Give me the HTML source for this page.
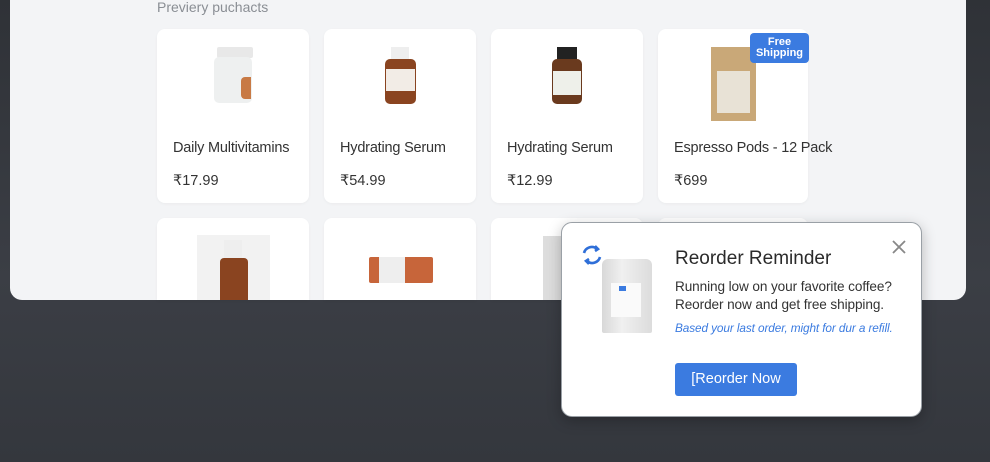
<!DOCTYPE html>
<html><head><meta charset="utf-8"><style>
*{box-sizing:border-box;margin:0;padding:0}
body{width:990px;height:462px;overflow:hidden;background:linear-gradient(180deg,#2f3237 0%,#3b3e45 60%,#34373d 100%);font-family:"Liberation Sans",sans-serif;position:relative}
.panel{position:absolute;left:10px;top:-20px;width:956px;height:320px;background:#f3f4f6;border-radius:12px;overflow:hidden}
.title{position:absolute;left:147px;top:19px;font-size:14px;color:#8a8e94}
.card{position:absolute;width:152px;height:174px;background:#fff;border-radius:8px;box-shadow:0 1px 3px rgba(0,0,0,.04)}
.card .n{position:absolute;left:16px;top:111px;font-size:14.5px;color:#333;white-space:nowrap;letter-spacing:-0.2px}
.card .p{position:absolute;left:16px;top:144px;font-size:14.5px;color:#333}
.pic{position:absolute}
.badge{position:absolute;left:750px;top:33px;width:59px;height:30px;background:#3b7be0;border-radius:4px;color:#fff;font-size:11px;font-weight:bold;text-align:center;line-height:11px;padding-top:4px}
.pop{position:absolute;left:561px;top:222px;width:361px;height:195px;background:#fff;border-radius:11px;border:1px solid #9aa0a6;box-shadow:0 4px 14px rgba(0,0,0,.25)}
.pop h2{position:absolute;left:113px;top:25px;font-size:19px;font-weight:normal;color:#2b2b2b}
.pop .t{position:absolute;left:113px;top:55px;font-size:13.6px;line-height:18px;color:#333;letter-spacing:-0.1px}
.pop .i{position:absolute;left:113px;top:98px;font-size:11.8px;color:#3b7be0;font-style:italic;letter-spacing:-0.1px}
.pop .b{position:absolute;left:113px;top:140px;width:122px;height:33px;background:#3b7be0;border-radius:3px;color:#fff;font-size:14.5px;line-height:33px;text-align:center}
.x{position:absolute;left:330px;top:17px}
</style></head><body>
<div class="panel">
<div class="title">Previery puchacts</div>
</div>
<div class="card" style="left:157px;top:29px">
<div class="pic" style="left:60px;top:18px;width:36px;height:11px;background:#e8e8e8;border-radius:2px"></div>
<div class="pic" style="left:57px;top:28px;width:38px;height:46px;background:#eef0f0;border-radius:5px"></div>
<div class="pic" style="left:84px;top:48px;width:10px;height:22px;background:#c87a45;border-radius:4px 0 0 4px"></div>
<div class="n">Daily Multivitamins</div><div class="p">₹17.99</div></div>
<div class="card" style="left:324px;top:29px">
<div class="pic" style="left:67px;top:18px;width:18px;height:13px;background:#eee"></div>
<div class="pic" style="left:61px;top:30px;width:31px;height:45px;background:#8a4420;border-radius:5px"></div>
<div class="pic" style="left:62px;top:40px;width:29px;height:22px;background:#f2ece6"></div>
<div class="n">Hydrating Serum</div><div class="p">₹54.99</div></div>
<div class="card" style="left:491px;top:29px">
<div class="pic" style="left:66px;top:18px;width:20px;height:14px;background:#222"></div>
<div class="pic" style="left:61px;top:30px;width:30px;height:45px;background:#6a3a1e;border-radius:5px"></div>
<div class="pic" style="left:62px;top:42px;width:28px;height:24px;background:#eef0ea"></div>
<div class="n">Hydrating Serum</div><div class="p">₹12.99</div></div>
<div class="card" style="left:658px;top:29px;width:150px">
<div class="pic" style="left:53px;top:18px;width:45px;height:74px;background:#c9a878"></div>
<div class="pic" style="left:59px;top:42px;width:33px;height:42px;background:#e8e2d6"></div>
<div class="n">Espresso Pods - 12 Pack</div><div class="p">₹699</div></div>
<div class="badge">Free<br>Shipping</div>
<div class="card" style="left:157px;top:218px;height:82px;border-radius:8px 8px 0 0">
<div class="pic" style="left:40px;top:17px;width:73px;height:65px;background:#f2f2f2"></div>
<div class="pic" style="left:67px;top:22px;width:18px;height:20px;background:#eee"></div>
<div class="pic" style="left:63px;top:40px;width:28px;height:42px;background:#8a4420;border-radius:4px 4px 0 0"></div></div>
<div class="card" style="left:324px;top:218px;height:82px;border-radius:8px 8px 0 0">
<div class="pic" style="left:45px;top:39px;width:64px;height:26px;background:#c7653a;border-radius:2px"></div>
<div class="pic" style="left:55px;top:39px;width:26px;height:26px;background:#eee"></div></div>
<div class="card" style="left:491px;top:218px;height:82px;border-radius:8px 8px 0 0">
<div class="pic" style="left:52px;top:18px;width:30px;height:64px;background:#ddd"></div></div>
<div class="card" style="left:658px;top:218px;height:82px;width:150px;border-radius:8px 8px 0 0"></div>
<div class="pop">
<svg style="position:absolute;left:18px;top:20px" width="24" height="24" viewBox="0 0 24 24" fill="none" stroke="#2f6fd8" stroke-width="2.6"><path d="M4 10a8 8 0 0 1 13-4"/><path d="M15 3l3 3-3 2"/><path d="M20 14a8 8 0 0 1-13 4"/><path d="M9 21l-3-3 3-2"/></svg>
<div style="position:absolute;left:40px;top:36px;width:50px;height:74px;background:linear-gradient(90deg,#d8d8d8,#f0f0f0 40%,#dcdcdc);border-radius:6px 6px 2px 2px"></div>
<div style="position:absolute;left:49px;top:60px;width:30px;height:34px;background:#fafafa"></div>
<div style="position:absolute;left:57px;top:63px;width:7px;height:5px;background:#3b7be0"></div>
<h2>Reorder Reminder</h2>
<div class="t">Running low on your favorite coffee?<br>Reorder now and get free shipping.</div>
<div class="i">Based your last order, might for dur a refill.</div>
<div class="b">[Reorder Now</div>
<svg class="x" width="14" height="14" viewBox="0 0 14 14" stroke="#888" stroke-width="1.8"><path d="M1 1l12 12M13 1L1 13"/></svg>
</div>
</body></html>
